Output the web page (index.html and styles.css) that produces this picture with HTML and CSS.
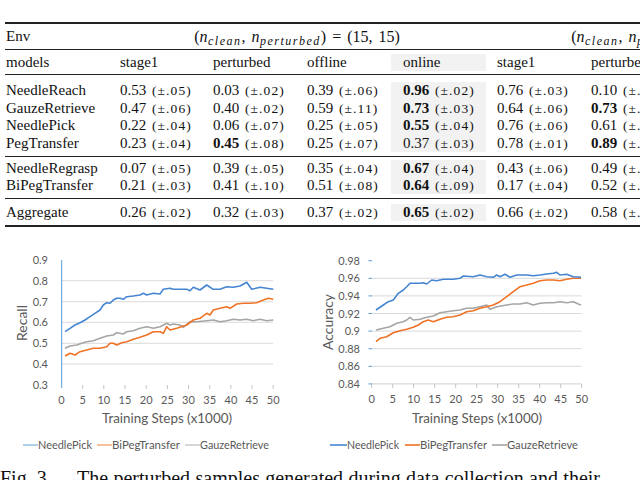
FILE: index.html
```html
<!DOCTYPE html>
<html>
<head>
<meta charset="utf-8">
<link rel="stylesheet" href="styles.css">
</head>
<body>
<div class="runhead"><span>TRAINING WITH PERTURBED</span></div>

<div class="tbl">
  <div class="rule thick"></div>
  <div class="row r17">
    <div class="c lab">Env</div>
    <div class="c span4 math">(<i>n</i><sub>clean</sub>, <i>n</i><sub>perturbed</sub>) = (15, 15)</div>
    <div class="c span4 math">(<i>n</i><sub>clean</sub>, <i>n</i><sub>perturbed</sub>) = (30, 30)</div>
  </div>
  <div class="rule m1"></div>
  <div class="row r17">
    <div class="c lab">models</div>
    <div class="c">stage1</div>
    <div class="c">perturbed</div>
    <div class="c">offline</div>
    <div class="c on">online</div>
    <div class="c p11">stage1</div>
    <div class="c p11">perturbed</div>
    <div class="c p11">offline</div>
  </div>
  <div class="rule m2"></div>
  <div class="row r175">
    <div class="c lab">NeedleReach</div>
    <div class="c">0.53 <span class="pm">(±.05)</span></div>
    <div class="c">0.03 <span class="pm">(±.02)</span></div>
    <div class="c">0.39 <span class="pm">(±.06)</span></div>
    <div class="c on"><b>0.96</b> <span class="pm">(±.02)</span></div>
    <div class="c p11">0.76 <span class="pm">(±.03)</span></div>
    <div class="c p11">0.10 <span class="pm">(±.05)</span></div>
  </div>
  <div class="row r175">
    <div class="c lab">GauzeRetrieve</div>
    <div class="c">0.47 <span class="pm">(±.06)</span></div>
    <div class="c">0.40 <span class="pm">(±.02)</span></div>
    <div class="c">0.59 <span class="pm">(±.11)</span></div>
    <div class="c on"><b>0.73</b> <span class="pm">(±.03)</span></div>
    <div class="c p11">0.64 <span class="pm">(±.06)</span></div>
    <div class="c p11"><b>0.73</b> <span class="pm">(±.04)</span></div>
  </div>
  <div class="row r175">
    <div class="c lab">NeedlePick</div>
    <div class="c">0.22 <span class="pm">(±.04)</span></div>
    <div class="c">0.06 <span class="pm">(±.07)</span></div>
    <div class="c">0.25 <span class="pm">(±.05)</span></div>
    <div class="c on"><b>0.55</b> <span class="pm">(±.04)</span></div>
    <div class="c p11">0.76 <span class="pm">(±.06)</span></div>
    <div class="c p11">0.61 <span class="pm">(±.05)</span></div>
  </div>
  <div class="row r175">
    <div class="c lab">PegTransfer</div>
    <div class="c">0.23 <span class="pm">(±.04)</span></div>
    <div class="c"><b>0.45</b> <span class="pm">(±.08)</span></div>
    <div class="c">0.25 <span class="pm">(±.07)</span></div>
    <div class="c on">0.37 <span class="pm">(±.03)</span></div>
    <div class="c p11">0.78 <span class="pm">(±.01)</span></div>
    <div class="c p11"><b>0.89</b> <span class="pm">(±.02)</span></div>
  </div>
  <div class="rule m3"></div>
  <div class="row r17">
    <div class="c lab">NeedleRegrasp</div>
    <div class="c">0.07 <span class="pm">(±.05)</span></div>
    <div class="c">0.39 <span class="pm">(±.05)</span></div>
    <div class="c">0.35 <span class="pm">(±.04)</span></div>
    <div class="c on"><b>0.67</b> <span class="pm">(±.04)</span></div>
    <div class="c p11">0.43 <span class="pm">(±.06)</span></div>
    <div class="c p11">0.49 <span class="pm">(±.07)</span></div>
  </div>
  <div class="row r17">
    <div class="c lab">BiPegTransfer</div>
    <div class="c">0.21 <span class="pm">(±.03)</span></div>
    <div class="c">0.41 <span class="pm">(±.10)</span></div>
    <div class="c">0.51 <span class="pm">(±.08)</span></div>
    <div class="c on"><b>0.64</b> <span class="pm">(±.09)</span></div>
    <div class="c p11">0.17 <span class="pm">(±.04)</span></div>
    <div class="c p11">0.52 <span class="pm">(±.06)</span></div>
  </div>
  <div class="rule m4"></div>
  <div class="row r17">
    <div class="c lab">Aggregate</div>
    <div class="c">0.26 <span class="pm">(±.02)</span></div>
    <div class="c">0.32 <span class="pm">(±.03)</span></div>
    <div class="c">0.37 <span class="pm">(±.02)</span></div>
    <div class="c on"><b>0.65</b> <span class="pm">(±.02)</span></div>
    <div class="c p11">0.66 <span class="pm">(±.02)</span></div>
    <div class="c p11">0.58 <span class="pm">(±.03)</span></div>
  </div>
  <div class="rule thick bot"></div>
</div>

<div class="figs">
  <svg class="chart" width="300" height="205" viewBox="0 0 300 205">
    <g class="grid">
      <line x1="62" y1="30.7" x2="273" y2="30.7"/>
      <line x1="62" y1="51.7" x2="273" y2="51.7"/>
      <line x1="62" y1="72.3" x2="273" y2="72.3"/>
      <line x1="62" y1="93.3" x2="273" y2="93.3"/>
      <line x1="62" y1="114" x2="273" y2="114"/>
    </g>
    <g class="ticks">
      <line x1="82.7" y1="135" x2="82.7" y2="139"/>
      <line x1="103.8" y1="135" x2="103.8" y2="139"/>
      <line x1="125" y1="135" x2="125" y2="139"/>
      <line x1="146.2" y1="135" x2="146.2" y2="139"/>
      <line x1="167.4" y1="135" x2="167.4" y2="139"/>
      <line x1="188.5" y1="135" x2="188.5" y2="139"/>
      <line x1="209.7" y1="135" x2="209.7" y2="139"/>
      <line x1="230.9" y1="135" x2="230.9" y2="139"/>
      <line x1="252" y1="135" x2="252" y2="139"/>
      <line x1="273.2" y1="135" x2="273.2" y2="139"/>
    </g>
    <line class="yaxis" x1="61.7" y1="10" x2="61.7" y2="138"/>
    <g class="tk ylab">
      <text x="48" y="14">0.9</text>
      <text x="48" y="34.7">0.8</text>
      <text x="48" y="55.7">0.7</text>
      <text x="48" y="76.3">0.6</text>
      <text x="48" y="97.3">0.5</text>
      <text x="48" y="118">0.4</text>
      <text x="48" y="139">0.3</text>
    </g>
    <g class="tk xlab">
      <text x="61.5" y="154">0</text>
      <text x="82.7" y="154">5</text>
      <text x="103.8" y="154">10</text>
      <text x="125" y="154">15</text>
      <text x="146.2" y="154">20</text>
      <text x="167.4" y="154">25</text>
      <text x="188.5" y="154">30</text>
      <text x="209.7" y="154">35</text>
      <text x="230.9" y="154">40</text>
      <text x="252" y="154">45</text>
      <text x="273.2" y="154">50</text>
    </g>
    <polyline class="s-gray" points="65,98.3 70,96 76.7,95 83.3,92.7 86.7,91.7 93.3,90.7 100,88.3 106.7,86 113.3,85 116.7,82.7 123.3,84 126.7,81.7 133.3,80.7 140,78.3 146.7,76.7 153.3,78.3 160,76.7 166.7,73.3 170,75 173.3,74 180,75 183.3,77.3 190,71.7 196.7,71.7 206.7,70.7 213.3,70 220,71.7 226.7,70.7 233.3,69.3 240,70 246.7,69.3 253.3,70.7 260,69.3 266.7,70.7 273.3,70"/>
    <polyline class="s-orange" points="65,106 70,103.3 75,105 80,101.7 86.7,100 93.3,98.3 100,98.3 106.7,96.7 110,93.3 113.3,93.3 116.7,95 121.7,92.7 126.7,91.7 133.3,89.3 140,87.3 146.7,85 153.3,81.7 160,81.7 163.3,83.3 166.7,76.7 170,80 176.7,78.3 183.3,76 186.7,75 193.3,70 200,68.3 206.7,63.3 210,65 213.3,60 220,58.3 226.7,56.7 230,58.3 236.7,54 243.3,53.3 250,53.3 256.7,52.7 263.3,50 268.3,48.3 273.3,49.3"/>
    <polyline class="s-blue" points="65,81.7 70,78.3 75,75 80,72.7 85,70 90,66.7 95,63.3 100,60 103.3,55 106.7,52.7 110,53.3 113.3,50 116.7,48.3 120,48.3 123.3,49.3 126.7,46.7 133.3,46 140,45 143.3,43.3 146.7,45 153.3,43.3 160,44 163.3,39.3 170,38.3 173.3,39.3 180,39.3 186.7,39.3 190,40.7 193.3,37.3 200,40 206.7,35 213.3,39.3 220,39.3 226.7,36.7 233.3,37.3 240,36 246.7,32.3 251.7,39.3 260,37.3 266.7,38.3 273.3,39.3"/>
    <text class="ttl" transform="translate(27,73) rotate(-90)">Recall</text>
    <text class="ttl" x="167" y="173" textLength="130" lengthAdjust="spacingAndGlyphs">Training Steps (x1000)</text>
    <line class="lg-blue-l" x1="23" y1="195" x2="38" y2="195"/>
    <text class="lg" x="38" y="198.5" textLength="54" lengthAdjust="spacingAndGlyphs">NeedlePick</text>
    <line class="lg-orange-l" x1="97" y1="195" x2="112" y2="195"/>
    <text class="lg" x="112" y="198.5" textLength="68" lengthAdjust="spacingAndGlyphs">BiPegTransfer</text>
    <line class="lg-gray-l" x1="185" y1="195" x2="200" y2="195"/>
    <text class="lg" x="200" y="198.5" textLength="69" lengthAdjust="spacingAndGlyphs">GauzeRetrieve</text>
  </svg>

  <svg class="chart" width="340" height="205" viewBox="0 0 340 205">
    <g class="grid">
      <line x1="72" y1="28.3" x2="281.7" y2="28.3"/>
      <line x1="72" y1="45.9" x2="281.7" y2="45.9"/>
      <line x1="72" y1="63.5" x2="281.7" y2="63.5"/>
      <line x1="72" y1="81.1" x2="281.7" y2="81.1"/>
      <line x1="72" y1="98.7" x2="281.7" y2="98.7"/>
      <line x1="72" y1="116.3" x2="281.7" y2="116.3"/>
      <line class="xaxis" x1="72" y1="133.9" x2="281.7" y2="133.9"/>
    </g>
    <g class="ticks">
      <line x1="71.7" y1="133.9" x2="71.7" y2="138"/>
      <line x1="92.7" y1="133.9" x2="92.7" y2="138"/>
      <line x1="113.7" y1="133.9" x2="113.7" y2="138"/>
      <line x1="134.7" y1="133.9" x2="134.7" y2="138"/>
      <line x1="155.7" y1="133.9" x2="155.7" y2="138"/>
      <line x1="176.7" y1="133.9" x2="176.7" y2="138"/>
      <line x1="197.7" y1="133.9" x2="197.7" y2="138"/>
      <line x1="218.7" y1="133.9" x2="218.7" y2="138"/>
      <line x1="239.7" y1="133.9" x2="239.7" y2="138"/>
      <line x1="260.7" y1="133.9" x2="260.7" y2="138"/>
      <line x1="281.7" y1="133.9" x2="281.7" y2="138"/>
    </g>
    <g class="yticks">
      <line x1="68.5" y1="10.7" x2="72" y2="10.7"/>
      <line x1="68.5" y1="28.3" x2="72" y2="28.3"/>
      <line x1="68.5" y1="45.9" x2="72" y2="45.9"/>
      <line x1="68.5" y1="63.5" x2="72" y2="63.5"/>
      <line x1="68.5" y1="81.1" x2="72" y2="81.1"/>
      <line x1="68.5" y1="98.7" x2="72" y2="98.7"/>
      <line x1="68.5" y1="116.3" x2="72" y2="116.3"/>
      <line x1="68.5" y1="133.9" x2="72" y2="133.9"/>
    </g>
    <g class="tk ylab">
      <text x="60" y="14.7">0.98</text>
      <text x="60" y="32.3">0.96</text>
      <text x="60" y="49.9">0.94</text>
      <text x="60" y="67.5">0.92</text>
      <text x="60" y="85.1">0.9</text>
      <text x="60" y="102.7">0.88</text>
      <text x="60" y="120.3">0.86</text>
      <text x="60" y="137.9">0.84</text>
    </g>
    <g class="tk xlab">
      <text x="71.7" y="153">0</text>
      <text x="92.7" y="153">5</text>
      <text x="113.7" y="153">10</text>
      <text x="134.7" y="153">15</text>
      <text x="155.7" y="153">20</text>
      <text x="176.7" y="153">25</text>
      <text x="197.7" y="153">30</text>
      <text x="218.7" y="153">35</text>
      <text x="239.7" y="153">40</text>
      <text x="260.7" y="153">45</text>
      <text x="281.7" y="153">50</text>
    </g>
    <polyline class="s-gray" points="76,80 83.3,78.3 90,76.7 96.7,73.3 103.3,71.7 106.7,70 110,67.3 113.3,70 120,69.3 126.7,67.3 133.3,66 140,62.7 146.7,61.7 153.3,60.7 160,60 166.7,58.3 173.3,58.3 180,56.7 186.7,55 190,59.3 196.7,56.7 206.7,55 213.3,54 220,54 226.7,52.7 233.3,55 240,53.3 246.7,52.7 253.3,52.7 260,51.7 266.7,52.7 273.3,51.7 278.3,54 281,55"/>
    <polyline class="s-orange" points="76,91.7 80,88.3 86.7,86.7 93.3,82.7 100,80.7 106.7,79.3 113.3,77.3 118.3,75 123.3,71.7 128.3,70 133.3,71.7 140,69.3 146.7,67.3 153.3,66.7 160,65 166.7,61.7 173.3,60.7 180,58.3 186.7,56.7 193.3,55 200,51.7 206.7,46.7 213.3,41.7 220,36.7 226.7,35 233.3,33.3 240,30.7 246.7,30 253.3,30 260,30.7 266.7,29.3 273.3,28.3 281,28.3"/>
    <polyline class="s-blue" points="76,60 83.3,55 88.3,51.7 93.3,50 98.3,43.3 103.3,40 106.7,36.7 110,33.3 115,33.3 120,33.3 123.3,32.7 126.7,34 131.7,30 136.7,30.7 143.3,29.3 153.3,29.3 160,28.3 163.3,26 173.3,26.7 180,25 186.7,26.7 193.3,27.3 196.7,25 200,26.7 205,24.3 210,27.3 216.7,25 226.7,25 233.3,25.7 240,25 246.7,24 253.3,23.3 256.7,22.3 260,25 266.7,24.3 273.3,26.7 281,27.3"/>
    <text class="ttl" transform="translate(33,72) rotate(-90)">Accuracy</text>
    <text class="ttl" x="177" y="173" textLength="130" lengthAdjust="spacingAndGlyphs">Training Steps (x1000)</text>
    <line class="lg-blue" x1="30" y1="195" x2="47" y2="195"/>
    <text class="lg" x="47" y="198.5" textLength="52" lengthAdjust="spacingAndGlyphs">NeedlePick</text>
    <line class="lg-orange" x1="105" y1="195" x2="120" y2="195"/>
    <text class="lg" x="120" y="198.5" textLength="67" lengthAdjust="spacingAndGlyphs">BiPegTransfer</text>
    <line class="lg-gray" x1="192" y1="195" x2="207" y2="195"/>
    <text class="lg" x="207" y="198.5" textLength="71" lengthAdjust="spacingAndGlyphs">GauzeRetrieve</text>
  </svg>
</div>

<div class="caption"><span class="fig">Fig. 3.</span>The perturbed samples generated during data collection and their</div>
</body>
</html>
```

FILE: styles.css
```css
html, body {
  margin: 0;
  padding: 0;
  overflow: hidden;
  background: #ffffff;
}

body {
  width: 640px;
  height: 480px;
  font-family: "Liberation Serif", "Times New Roman", serif;
  color: #111111;
}

/* running head, mostly cut off at top */
.runhead {
  height: 22px;
  overflow: hidden;
  padding-left: 472px;
  white-space: nowrap;
}
.runhead span {
  display: block;
  font-size: 12px;
  line-height: 12px;
  margin-top: -11px;
  letter-spacing: 1.6px;
}

/* table */
.tbl {
  margin-left: 5px;
  width: 857px;
}

.row {
  display: grid;
  grid-template-columns: 103px 93px 94px 96px 95px 94px 94px 94px 94px;
  font-size: 15px;
  white-space: nowrap;
}
.r17 { line-height: 17px; }
.r175 { line-height: 17.5px; }

.c { padding-left: 12px; }
.c.lab { padding-left: 1px; }
.c.p11 { padding-left: 11px; }
.c.on { background: #f2f2f2; }
.span4 {
  grid-column: span 4;
  padding-left: 0;
  text-align: center;
}

.math { font-size: 16px; word-spacing: 2px; }
.math i { font-style: italic; letter-spacing: 0.5px; }
.math sub {
  font-style: italic;
  font-size: 12px;
  line-height: 0;
  letter-spacing: 1.5px;
  vertical-align: -3px;
}

.pm {
  font-size: 13.5px;
  letter-spacing: 1.1px;
  margin-left: 2px;
}

b { font-weight: bold; }

.rule {
  border-top: 1px solid #222222;
}
.rule.thick { border-top-width: 2px; margin-bottom: 4px; }
.rule.m1 { margin: 4px 0 4px; }
.rule.m2 { margin: 3px 0 7px; }
.rule.m3 { margin: 4px 0 3px; }
.rule.m4 { margin: 4px 0 5px; }
.rule.bot { margin: 4px 0 0; }

/* figures */
.figs {
  display: flex;
  margin-top: 23px;
}
.chart { display: block; flex: none; }

.chart text {
  font-family: Lato, "Open Sans", sans-serif;
  fill: #595959;
}
.tk { font-size: 11px; }
.ylab text { text-anchor: end; }
.xlab text { text-anchor: middle; }
.ttl { font-size: 14px; text-anchor: middle; }
.lg { font-size: 10.5px; }

.grid line { stroke: #dadada; stroke-width: 1; }
.grid line.xaxis { stroke: #cfcfcf; }
.ticks line { stroke: #c4c4c4; stroke-width: 1; }
.yticks line { stroke: #5b9bd5; stroke-width: 1; }
.yaxis { stroke: #5b9bd5; stroke-width: 1; }

polyline { fill: none; stroke-width: 1.6; stroke-linejoin: round; }
.s-blue { stroke: #4585d2; }
.s-orange { stroke: #ee7326; }
.s-gray { stroke: #a5a5a5; }

.lg-blue-l { stroke: #9dc3e6; stroke-width: 1.6; }
.lg-orange-l { stroke: #f4b183; stroke-width: 1.6; }
.lg-gray-l { stroke: #cccccc; stroke-width: 1.6; }
.lg-blue { stroke: #4585d2; stroke-width: 1.6; }
.lg-orange { stroke: #ee7326; stroke-width: 1.6; }
.lg-gray { stroke: #a5a5a5; stroke-width: 1.6; }

/* caption */
.caption {
  margin-top: 12px;
  font-size: 20px;
  line-height: 22px;
  white-space: nowrap;
  word-spacing: 0.4px;
}
.fig {
  display: inline-block;
  width: 77px;
  word-spacing: 0;
}
```
